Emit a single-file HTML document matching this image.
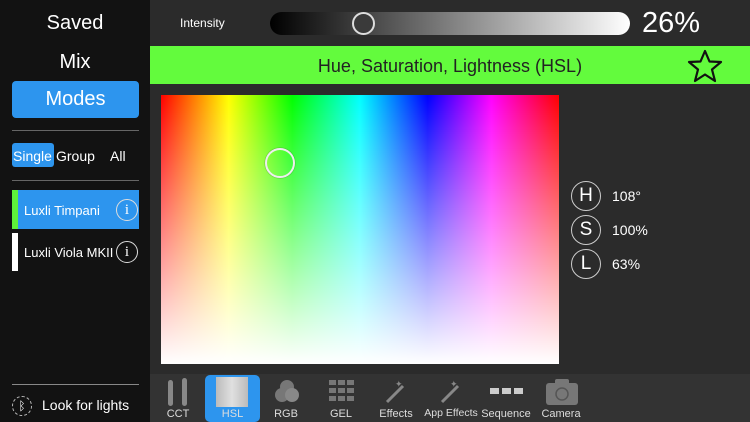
<!DOCTYPE html>
<html><head><style>
*{margin:0;padding:0;box-sizing:border-box}
body{width:750px;height:422px;overflow:hidden;background:#2b2b2b;font-family:"Liberation Sans",sans-serif;color:#fff;position:relative}
.a{position:absolute}
#side{left:0;top:0;width:150px;height:422px;background:#121212}
.c{text-align:center}
.tab{font-size:11px;text-align:center;color:#ddd}
.ic{width:22px;height:22px;border:1px solid #ddd;border-radius:50%;font-size:15px;text-align:center;line-height:20px;font-family:"Liberation Serif",serif}
.hsl{width:30px;height:30px;border:1px solid #ccc;border-radius:50%;font-size:19px;text-align:center;line-height:28px}
</style></head><body>
<div id="side" class="a">
<div class="a c" style="left:0;width:150px;top:12px;font-size:20px">Saved</div>
<div class="a c" style="left:0;width:150px;top:51px;font-size:20px">Mix</div>
<div class="a c" style="left:12px;width:127px;top:81px;height:37px;background:#2d95ee;border-radius:4px;font-size:20px;line-height:37px">Modes</div>
<div class="a" style="left:12px;width:127px;top:130px;height:1px;background:#666"></div>
<div class="a" style="left:12px;top:143px;width:42px;height:24px;background:#2d95ee;border-radius:3px"></div>
<div class="a" style="left:13px;top:148px;font-size:14px">Single</div>
<div class="a" style="left:56px;top:148px;font-size:14px">Group</div>
<div class="a" style="left:110px;top:148px;font-size:14px">All</div>
<div class="a" style="left:12px;width:127px;top:180px;height:1px;background:#666"></div>
<div class="a" style="left:12px;top:190px;width:127px;height:39px;background:#2d95ee"></div>
<div class="a" style="left:12px;top:190px;width:6px;height:39px;background:#5ef03a"></div>
<div class="a" style="left:24px;top:203px;font-size:13px">Luxli Timpani</div>
<div class="a ic" style="left:116px;top:199px">i</div>
<div class="a" style="left:12px;top:233px;width:6px;height:38px;background:#fff"></div>
<div class="a" style="left:24px;top:245px;font-size:13px">Luxli Viola MKII</div>
<div class="a ic" style="left:116px;top:241px">i</div>
<div class="a" style="left:12px;width:127px;top:384px;height:1px;background:#888"></div>
<div class="a" style="left:12px;top:396px;width:20px;height:20px;border:1px dashed #bbb;border-radius:50%;font-size:12px;text-align:center;line-height:18px">ᛒ</div>
<div class="a" style="left:42px;top:397px;font-size:14px">Look for lights</div>
</div>
<div class="a" style="left:180px;top:16px;font-size:12px">Intensity</div>
<div class="a" style="left:270px;top:12px;width:360px;height:23px;border-radius:12px;background:linear-gradient(90deg,#000,#fff)"></div>
<div class="a" style="left:352px;top:12px;width:23px;height:23px;border:2px solid #ddd;border-radius:50%;background:#3a3a3a"></div>
<div class="a" style="left:642px;top:7px;font-size:29px">26%</div>
<div class="a" style="left:150px;top:46px;width:600px;height:38px;background:#63fb3d"></div>
<div class="a c" style="left:150px;width:600px;top:56px;font-size:18px;color:#222">Hue, Saturation, Lightness (HSL)</div>
<svg class="a" style="left:686px;top:48px" width="38" height="36" viewBox="0 0 38 36"><polygon points="19,3 23.5,13.5 35,14 26,21.5 29,33 19,26.5 9,33 12,21.5 3,14 14.5,13.5" fill="none" stroke="#111" stroke-width="2.2" stroke-linejoin="round"/></svg>
<div class="a" style="left:161px;top:95px;width:398px;height:269px;background:linear-gradient(180deg,rgba(255,255,255,0),#fff),linear-gradient(90deg,#f00,#ff0 17%,#0f0 33%,#0ff 50%,#00f 67%,#f0f 83%,#f00)"></div>
<div class="a" style="left:265px;top:148px;width:30px;height:30px;border:2px solid #eee;border-radius:50%;box-shadow:0 0 1px #333"></div>
<div class="a hsl" style="left:571px;top:181px">H</div><div class="a" style="left:612px;top:188px;font-size:14px">108°</div>
<div class="a hsl" style="left:571px;top:215px">S</div><div class="a" style="left:612px;top:222px;font-size:14px">100%</div>
<div class="a hsl" style="left:571px;top:249px">L</div><div class="a" style="left:612px;top:256px;font-size:14px">63%</div>
<div class="a" style="left:150px;top:374px;width:600px;height:48px;background:#333"></div>
<div class="a" style="left:205px;top:375px;width:55px;height:47px;background:#2d95ee;border-radius:5px"></div>
<div class="a" style="left:216px;top:377px;width:32px;height:30px;background:linear-gradient(90deg,#bbb,#e0e0e0,#bbb)"></div>
<div class="a" style="left:168px;top:380px;width:5px;height:26px;background:#888;border-radius:3px"></div>
<div class="a" style="left:182px;top:378px;width:5px;height:28px;background:#888;border-radius:3px"></div>
<svg class="a" style="left:272px;top:377px" width="30" height="28"><circle cx="15" cy="10" r="7" fill="#777"/><circle cx="10" cy="18" r="7" fill="#777"/><circle cx="20" cy="18" r="7" fill="#888"/></svg>
<svg class="a" style="left:328px;top:380px" width="28" height="22" fill="#777"><rect x="1" y="0" width="7" height="5"/><rect x="10" y="0" width="7" height="5"/><rect x="19" y="0" width="7" height="5"/><rect x="1" y="8" width="7" height="5"/><rect x="10" y="8" width="7" height="5"/><rect x="19" y="8" width="7" height="5"/><rect x="1" y="16" width="7" height="5"/><rect x="10" y="16" width="7" height="5"/><rect x="19" y="16" width="7" height="5"/></svg>
<svg class="a" style="left:383px;top:378px" width="28" height="26"><line x1="4" y1="24" x2="20" y2="8" stroke="#888" stroke-width="3"/><text x="12" y="9" font-size="9" fill="#888">✦</text></svg>
<svg class="a" style="left:438px;top:378px" width="28" height="26"><line x1="4" y1="24" x2="20" y2="8" stroke="#888" stroke-width="3"/><text x="12" y="9" font-size="9" fill="#888">✦</text></svg>
<svg class="a" style="left:490px;top:387px" width="34" height="8" fill="#ccc"><rect x="0" y="1" width="9" height="6"/><rect x="12" y="1" width="9" height="6"/><rect x="24" y="1" width="9" height="6"/></svg>
<svg class="a" style="left:545px;top:378px" width="34" height="28"><rect x="1" y="5" width="32" height="22" rx="3" fill="#777"/><rect x="10" y="1" width="14" height="6" rx="2" fill="#777"/><circle cx="17" cy="16" r="6" fill="none" stroke="#555" stroke-width="1.5"/></svg>
<div class="a tab" style="left:160px;width:36px;top:408px">CCT</div>
<div class="a tab" style="left:205px;width:55px;top:408px">HSL</div>
<div class="a tab" style="left:268px;width:36px;top:408px">RGB</div>
<div class="a tab" style="left:323px;width:36px;top:408px">GEL</div>
<div class="a tab" style="left:372px;width:48px;top:408px">Effects</div>
<div class="a tab" style="left:422px;width:58px;top:407px;font-size:10.5px">App Effects</div>
<div class="a tab" style="left:478px;width:56px;top:408px">Sequence</div>
<div class="a tab" style="left:536px;width:50px;top:408px">Camera</div>
</body></html>
